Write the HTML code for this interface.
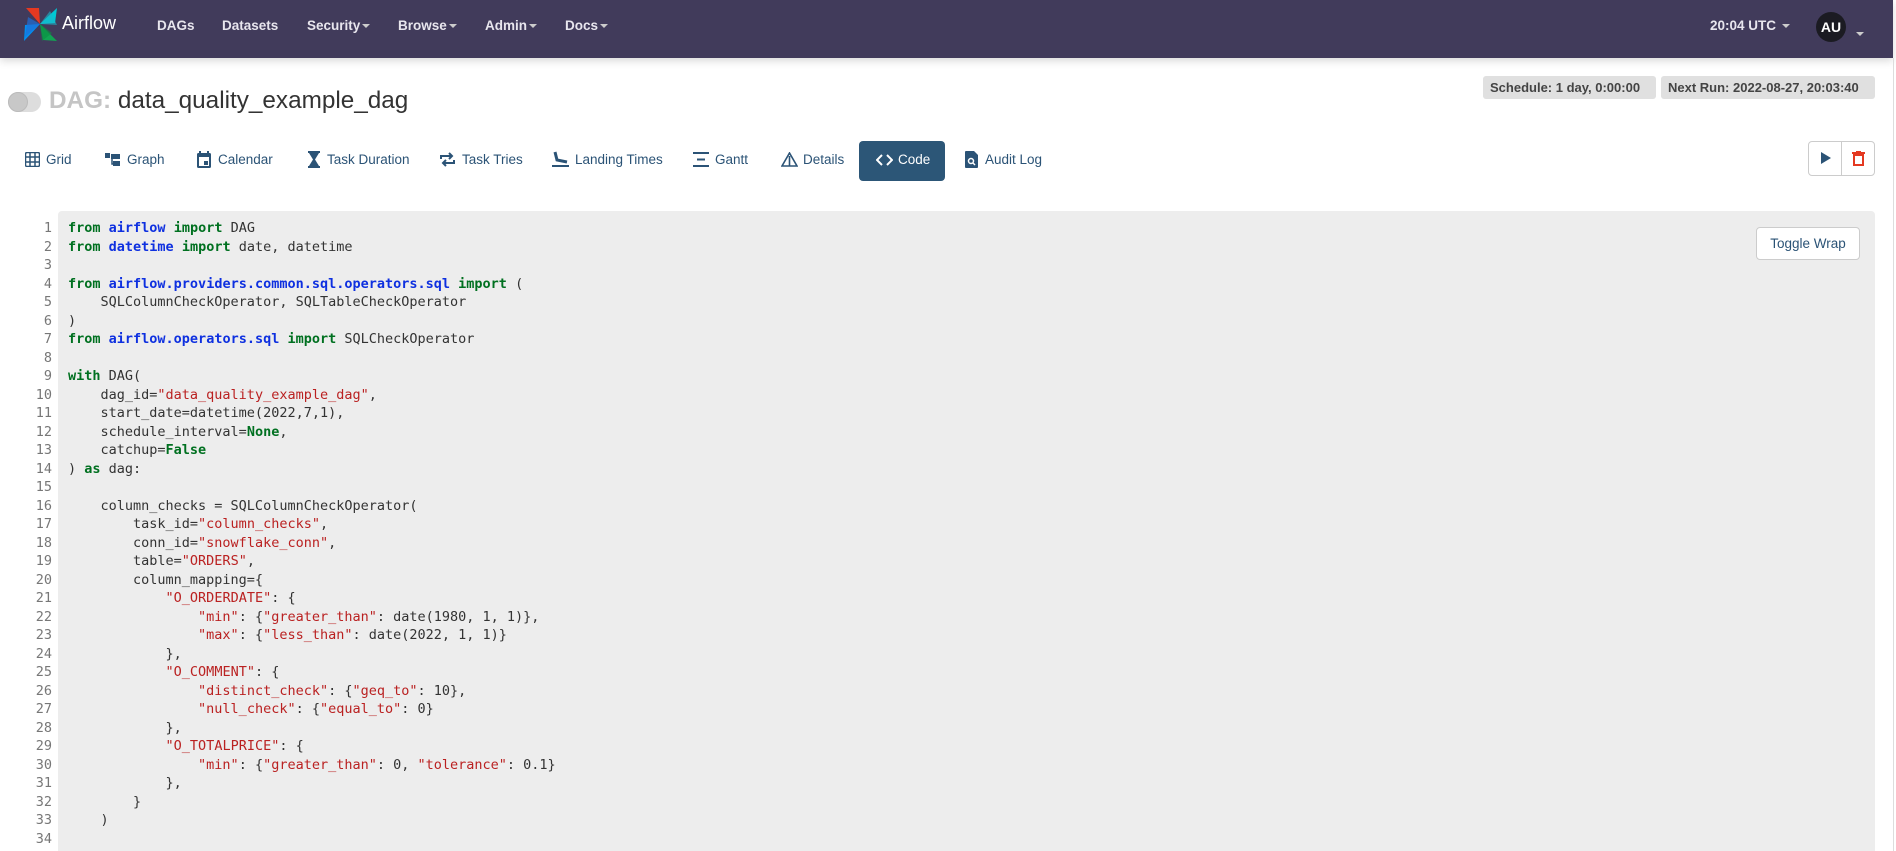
<!DOCTYPE html>
<html><head><meta charset="utf-8"><style>
*{margin:0;padding:0;box-sizing:border-box}
body{width:1896px;height:851px;overflow:hidden;background:#fff;font-family:"Liberation Sans",sans-serif;position:relative}
.nav{position:absolute;left:0;top:0;width:1893px;height:58px;background:#413b5b;box-shadow:0 3px 8px rgba(0,0,0,.15)}
.nav .it{position:absolute;top:18px;color:#e8e6ee;font-weight:bold;font-size:13.5px}
.car{display:inline-block;width:0;height:0;border-left:4px solid transparent;border-right:4px solid transparent;border-top:4px solid #ccc;vertical-align:middle;margin-left:2px}
.abs{position:absolute}
.badge{position:absolute;top:76px;height:23px;background:#e0e0e0;border-radius:3px;font-weight:bold;font-size:13px;color:#444;padding:4px 7px;line-height:15px;white-space:nowrap}
.tab{position:absolute;top:151px;font-size:13.5px;color:#2b5376;line-height:18px}
.code{position:absolute;left:58px;top:211px;width:1817px;height:640px;background:#ededed;border-radius:4px 4px 0 0}
pre{position:absolute;left:0;top:219px;font-family:"DejaVu Sans Mono",monospace;font-size:13.5px;line-height:18.5px;color:#333}
.ln{position:absolute;left:0;width:52px;text-align:right;color:#777}
.cd{position:absolute;left:68px;white-space:pre}
.k{color:#007020;font-weight:bold}.n{color:#0e30e0;font-weight:bold}.s{color:#ba2121}
</style></head><body>
<div class="nav">
<svg class="abs" style="left:22px;top:5px" width="38" height="38" viewBox="0 0 38 38">
<path d="M18 19 L4 3 L17 3 Z" fill="#e43921"/>
<path d="M18 19 L35 3 L33 18 Z" fill="#00c7d4"/>
<path d="M18 19 L35 36 L21 35 Z" fill="#11a452"/>
<path d="M18 19 L2 36 L3 20 Z" fill="#0190f1"/>
<path d="M18 19 L6 12 L3 32 Z" fill="#1f6fd6" opacity=".7"/>
<path d="M18 19 L28 6 L35 20 Z" fill="#1bb5c9" opacity=".6"/>
<path d="M18 19 L30 28 L20 36 Z" fill="#0a8f43" opacity=".6"/>
</svg>
<div class="abs" style="left:62px;top:13px;color:#fff;font-size:18px">Airflow</div>
<div class="it" style="left:157px">DAGs</div>
<div class="it" style="left:222px">Datasets</div>
<div class="it" style="left:307px">Security<span class="car"></span></div>
<div class="it" style="left:398px">Browse<span class="car"></span></div>
<div class="it" style="left:485px">Admin<span class="car"></span></div>
<div class="it" style="left:565px">Docs<span class="car"></span></div>
<div class="it" style="left:1710px">20:04 UTC <span class="car"></span></div>
<div class="abs" style="left:1816px;top:12px;width:30px;height:30px;border-radius:50%;background:#1b1b22;color:#fff;font-weight:bold;font-size:14px;text-align:center;line-height:30px">AU</div>
<div class="abs" style="left:1854px;top:25px"><span class="car"></span></div>
</div>

<div class="abs" style="left:8px;top:92px;width:33px;height:20px;border-radius:10px;background:#ddd"></div>
<div class="abs" style="left:8px;top:92px;width:20px;height:20px;border-radius:50%;background:#c8c8c8;border:1px solid #bbb"></div>
<div class="abs" style="left:49px;top:87px;font-size:24.3px;line-height:28px"><span style="color:#c5c5c5;font-weight:bold">DAG:</span> <span style="color:#333">data_quality_example_dag</span></div>

<div class="badge" style="left:1483px;width:173px">Schedule: 1 day, 0:00:00</div>
<div class="badge" style="left:1661px;width:214px">Next Run: 2022-08-27, 20:03:40</div>

<svg class="abs" style="left:25px;top:152px" width="15" height="15"><rect x="0.5" y="0.5" width="14" height="14" rx="1.5" fill="none" stroke="#2b5376" stroke-width="1.5"/><path d="M5 1V14M10 1V14M1 5H14M1 10H14" stroke="#2b5376" stroke-width="1.5"/></svg>
<div class="tab" style="left:46px">Grid</div>
<svg class="abs" style="left:105px;top:152px" width="16" height="15"><rect x="0" y="1" width="5" height="5" fill="#2b5376"/><rect x="6" y="2" width="9" height="5" fill="#2b5376"/><rect x="8" y="9" width="7" height="5" fill="#2b5376"/><path d="M7 6V12H9" stroke="#2b5376" stroke-width="1.5" fill="none"/></svg>
<div class="tab" style="left:127px">Graph</div>
<svg class="abs" style="left:197px;top:151px" width="14" height="17"><rect x="0" y="2" width="14" height="15" rx="1.5" fill="#2b5376"/><rect x="2" y="6" width="10" height="9" fill="#fff"/><rect x="7" y="10" width="4" height="4" fill="#2b5376"/><rect x="2" y="0" width="2" height="3" fill="#2b5376"/><rect x="10" y="0" width="2" height="3" fill="#2b5376"/></svg>
<div class="tab" style="left:218px">Calendar</div>
<svg class="abs" style="left:308px;top:151px" width="12" height="17"><path d="M0 0H12V2H11L7 8.5 11 15H12V17H0V15H1L5 8.5 1 2H0Z" fill="#2b5376"/></svg>
<div class="tab" style="left:327px">Task Duration</div>
<svg class="abs" style="left:440px;top:152px" width="15" height="15"><path d="M1 7V4H12M9 1L12 4 9 7M14 8V11H3M6 8L3 11 6 14" stroke="#2b5376" stroke-width="2" fill="none"/></svg>
<div class="tab" style="left:462px">Task Tries</div>
<svg class="abs" style="left:552px;top:151px" width="17" height="16"><path d="M3 1L5 9 15 11" stroke="#2b5376" stroke-width="3" fill="none"/><rect x="0" y="14" width="17" height="2" fill="#2b5376"/></svg>
<div class="tab" style="left:575px">Landing Times</div>
<svg class="abs" style="left:693px;top:152px" width="16" height="15"><rect x="0" y="0" width="16" height="2" fill="#2b5376"/><rect x="4" y="6.5" width="8" height="2" fill="#2b5376"/><rect x="0" y="13" width="16" height="2" fill="#2b5376"/></svg>
<div class="tab" style="left:715px">Gantt</div>
<svg class="abs" style="left:781px;top:152px" width="17" height="15"><path d="M8.5 1L1 14H16Z M8.5 4V14" stroke="#2b5376" stroke-width="1.6" fill="none"/></svg>
<div class="tab" style="left:803px">Details</div>
<div class="abs" style="left:859px;top:141px;width:86px;height:40px;background:#2c5677;border-radius:4px"></div>
<svg class="abs" style="left:876px;top:154px" width="17" height="12"><path d="M6 1L1 6 6 11M11 1L16 6 11 11" stroke="#fff" stroke-width="2" fill="none"/></svg>
<div class="tab" style="left:898px;color:#fff">Code</div>
<svg class="abs" style="left:965px;top:151px" width="13" height="17"><path d="M0 1Q0 0 1 0H9L13 4V16Q13 17 12 17H1Q0 17 0 16Z" fill="#2b5376"/><circle cx="6" cy="10" r="2.5" fill="none" stroke="#fff" stroke-width="1.5"/><path d="M8 12L10 14" stroke="#fff" stroke-width="1.5"/></svg>
<div class="tab" style="left:985px">Audit Log</div>

<div class="abs" style="left:1808px;top:141px;width:67px;height:35px;border:1px solid #ccc;border-radius:4px"></div>
<div class="abs" style="left:1841px;top:141px;width:1px;height:35px;background:#ccc"></div>
<svg class="abs" style="left:1821px;top:152px" width="10" height="12"><path d="M0 0L10 6 0 12Z" fill="#2b5376"/></svg>
<svg class="abs" style="left:1852px;top:151px" width="13" height="15"><rect x="0" y="1" width="13" height="2" fill="#e43921"/><rect x="4" y="0" width="5" height="2" fill="#e43921"/><rect x="2" y="4" width="9" height="10" fill="none" stroke="#e43921" stroke-width="2"/></svg>

<div class="code"></div>
<div class="abs" style="left:1756px;top:227px;width:104px;height:33px;background:#fff;border:1px solid #ccc;border-radius:4px;color:#2b5376;font-size:13.5px;text-align:center;line-height:31px">Toggle Wrap</div>
<div class="abs" style="left:1893px;top:58px;width:1px;height:793px;background:#ddd"></div>

<pre><div class="ln">1
2
3
4
5
6
7
8
9
10
11
12
13
14
15
16
17
18
19
20
21
22
23
24
25
26
27
28
29
30
31
32
33
34</div><div class="cd"><span class="k">from</span> <span class="n">airflow</span> <span class="k">import</span> DAG
<span class="k">from</span> <span class="n">datetime</span> <span class="k">import</span> date, datetime

<span class="k">from</span> <span class="n">airflow.providers.common.sql.operators.sql</span> <span class="k">import</span> (
    SQLColumnCheckOperator, SQLTableCheckOperator
)
<span class="k">from</span> <span class="n">airflow.operators.sql</span> <span class="k">import</span> SQLCheckOperator

<span class="k">with</span> DAG(
    dag_id=<span class="s">"data_quality_example_dag"</span>,
    start_date=datetime(2022,7,1),
    schedule_interval=<span class="k">None</span>,
    catchup=<span class="k">False</span>
) <span class="k">as</span> dag:

    column_checks = SQLColumnCheckOperator(
        task_id=<span class="s">"column_checks"</span>,
        conn_id=<span class="s">"snowflake_conn"</span>,
        table=<span class="s">"ORDERS"</span>,
        column_mapping={
            <span class="s">"O_ORDERDATE"</span>: {
                <span class="s">"min"</span>: {<span class="s">"greater_than"</span>: date(1980, 1, 1)},
                <span class="s">"max"</span>: {<span class="s">"less_than"</span>: date(2022, 1, 1)}
            },
            <span class="s">"O_COMMENT"</span>: {
                <span class="s">"distinct_check"</span>: {<span class="s">"geq_to"</span>: 10},
                <span class="s">"null_check"</span>: {<span class="s">"equal_to"</span>: 0}
            },
            <span class="s">"O_TOTALPRICE"</span>: {
                <span class="s">"min"</span>: {<span class="s">"greater_than"</span>: 0, <span class="s">"tolerance"</span>: 0.1}
            },
        }
    )
</div></pre>
</body></html>
